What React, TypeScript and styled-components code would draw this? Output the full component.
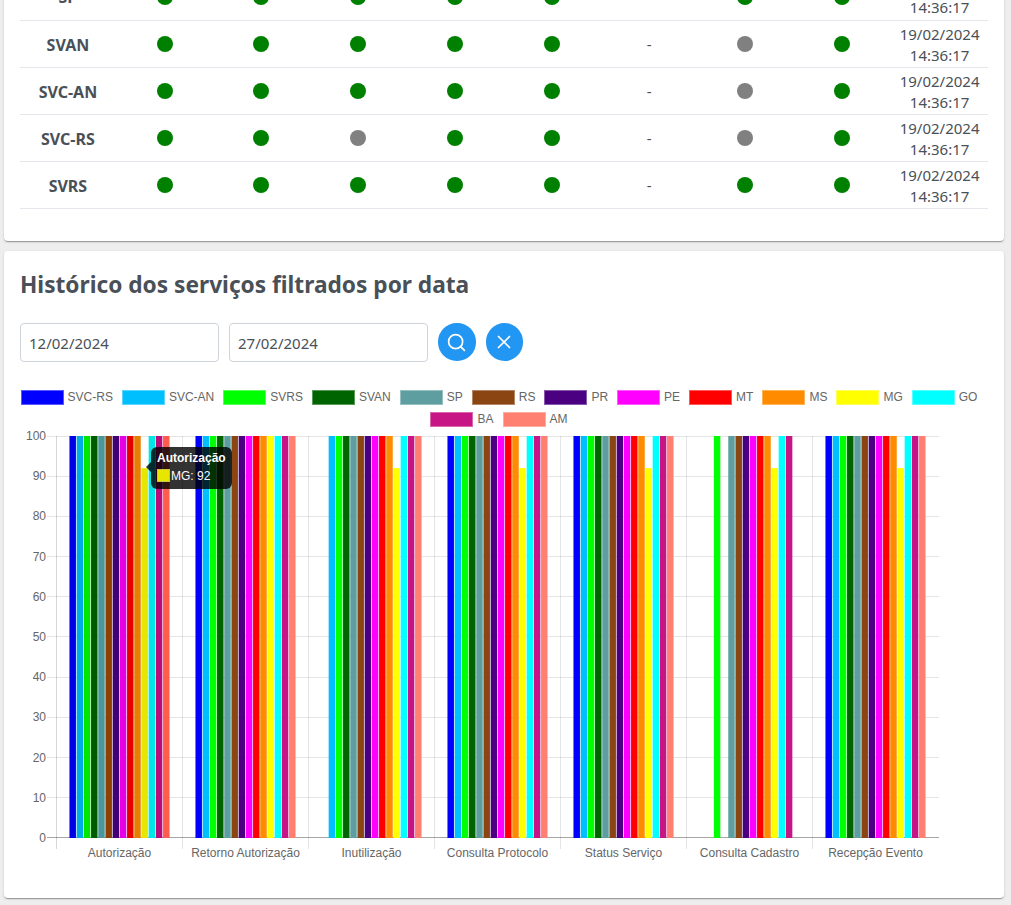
import React from "react";
import styled, { createGlobalStyle } from "styled-components";
import { Search, X } from "lucide-react";

const Global = createGlobalStyle`
  html, body { margin: 0; padding: 0; background: #eeeeee; }
  body { font-family: "Noto Sans", "Open Sans", sans-serif; color: #495057; height: 905px; overflow: hidden; }
`;

const Page = styled.main`
  display: flex;
  flex-direction: column;
  gap: 10px;
  padding: 0 7px 0 4px;
  margin-top: -27px;
`;

const Card = styled.section<{ $pad?: string }>`
  background: #fff;
  border-radius: 4px;
  padding: ${(p) => p.$pad || "0 16px"};
  box-shadow: 0 2px 1px -1px rgba(0, 0, 0, 0.2), 0 1px 1px 0 rgba(0, 0, 0, 0.14), 0 1px 3px 0 rgba(0, 0, 0, 0.12);
`;

const Table = styled.table`
  width: 968px;
  table-layout: fixed;
  border-collapse: collapse;
`;

const Row = styled.tr`
  height: 47px;
  border-bottom: 1px solid #e4e7eb;
`;

const NameCell = styled.th`
  padding: 2px 1px 0 0;
  font-size: 16px;
  font-weight: 700;
  text-align: center;
  color: #495057;
`;

const Cell = styled.td`
  padding: 2px 0 0;
  font-size: 15px;
  line-height: 21px;
  text-align: center;
  color: #495057;
`;

const Dot = styled.span<{ $on: boolean }>`
  display: block;
  width: 16px;
  height: 16px;
  margin: 0 0 1px calc(50% - 8.5px);
  border-radius: 50%;
  background: ${(p) => (p.$on ? "#008000" : "#808080")};
`;

const Title = styled.h2`
  margin: 0;
  font-size: 22.7px;
  line-height: 30px;
  font-weight: 700;
  color: #495057;
`;

const Filters = styled.div`
  display: flex;
  align-items: center;
  gap: 10px;
  margin-top: 23px;
`;

const DateInput = styled.input`
  box-sizing: border-box;
  width: 199px;
  height: 39px;
  padding: 1px 8px 0;
  border: 1px solid #ced4da;
  border-radius: 4px;
  font: 15px "Noto Sans", sans-serif;
  color: #495057;
  outline: none;
`;

const RoundButton = styled.button`
  display: flex;
  align-items: center;
  justify-content: center;
  width: 37.5px;
  height: 37.5px;
  padding: 0;
  border: 0;
  border-radius: 50%;
  background: #2196f3;
  color: #fff;
`;

const Legend = styled.ul`
  display: flex;
  flex-wrap: wrap;
  justify-content: center;
  row-gap: 7px;
  width: 967px;
  margin: 28px 0 0;
  padding: 0;
  list-style: none;
`;

const LegendItem = styled.li`
  display: flex;
  align-items: center;
  gap: 4px;
  height: 15px;
  margin-right: 9px;
  font: 12px/15px "Liberation Sans", Arial, sans-serif;
  color: #666;
`;

const Swatch = styled.span<{ $color: string }>`
  box-sizing: border-box;
  width: 43px;
  height: 15px;
  background: ${(p) => p.$color};
  box-shadow: inset 0 0 0 1px rgba(255, 255, 255, 0.35);
`;

const ChartWrap = styled.div`
  position: relative;
  height: 434px;
  margin: 3px 0 34px;
`;

const ChartSvg = styled.svg`
  display: block;
  font-family: "Liberation Sans", Arial, sans-serif;
  font-size: 12px;
`;

const Tooltip = styled.div`
  position: absolute;
  left: 131px;
  top: 17px;
  box-sizing: border-box;
  width: 81px;
  height: 42px;
  padding: 4px 6px;
  border-radius: 6px;
  background: rgba(0, 0, 0, 0.8);
  color: #fff;
  font: 12px/14px "Liberation Sans", Arial, sans-serif;
  &::before {
    content: "";
    position: absolute;
    left: -5px;
    top: 15px;
    border-style: solid;
    border-width: 5px 5px 5px 0;
    border-color: transparent rgba(0, 0, 0, 0.8) transparent transparent;
  }
`;

const TipTitle = styled.div`
  font-weight: 700;
  margin-bottom: 4px;
`;

const TipLine = styled.div`
  display: flex;
  align-items: center;
  gap: 1px;
  height: 14px;
`;

const TipSwatch = styled.span`
  box-sizing: border-box;
  width: 13px;
  height: 13px;
  background: #e6e600;
  border: 1px solid #c8c83c;
`;

const series = [
  { n: "SVC-RS", c: "#0000ff", h: "#0000e6" },
  { n: "SVC-AN", c: "#00bfff", h: "#00ace6" },
  { n: "SVRS", c: "#00ff00", h: "#00e600" },
  { n: "SVAN", c: "#006400", h: "#005a00" },
  { n: "SP", c: "#5f9ea0", h: "#4a9699" },
  { n: "RS", c: "#8b4513", h: "#8f3f00" },
  { n: "PR", c: "#4b0082", h: "#430075" },
  { n: "PE", c: "#ff00ff", h: "#e600e6" },
  { n: "MT", c: "#ff0000", h: "#e60000" },
  { n: "MS", c: "#ff8c00", h: "#e67e00" },
  { n: "MG", c: "#ffff00", h: "#e6e600" },
  { n: "GO", c: "#00ffff", h: "#00e6e6" },
  { n: "BA", c: "#c71585", h: "#bb0a7a" },
  { n: "AM", c: "#ff8070", h: "#ff5c4d" },
];

const categories = [
  { n: "Autorização", skip: [] as number[], full: false },
  { n: "Retorno Autorização", skip: [], full: true },
  { n: "Inutilização", skip: [0], full: false },
  { n: "Consulta Protocolo", skip: [], full: false },
  { n: "Status Serviço", skip: [], full: false },
  { n: "Consulta Cadastro", skip: [0, 1, 3, 13], full: false },
  { n: "Recepção Evento", skip: [], full: false },
];

const rows = [
  { n: "SP", d: [1, 1, 1, 1, 1, -1, 1, 1] },
  { n: "SVAN", d: [1, 1, 1, 1, 1, -1, 0, 1] },
  { n: "SVC-AN", d: [1, 1, 1, 1, 1, -1, 0, 1] },
  { n: "SVC-RS", d: [1, 1, 0, 1, 1, -1, 0, 1] },
  { n: "SVRS", d: [1, 1, 1, 1, 1, -1, 1, 1] },
];

// chart coordinates are relative to the svg, whose origin is at page (20, 430)
const X0 = 36.5;
const STEP = 126;
const Y0 = 6;
const UNIT = 4.02;
const yOf = (v: number) => Y0 + (100 - v) * UNIT;
const lineY = (v: number) => Math.floor(yOf(v)) + 0.5;

function Chart() {
  const ticks = Array.from({ length: 11 }, (_, i) => i * 10);
  return (
    <ChartSvg width={966} height={434} viewBox="0 0 966 434">
      {ticks.map((t) => (
        <g key={t}>
          <line
            x1={27}
            x2={919}
            y1={lineY(t)}
            y2={lineY(t)}
            stroke={t === 0 ? "rgba(0,0,0,0.35)" : "rgba(0,0,0,0.1)"}
          />
          <text x={26} y={yOf(t) + 4} textAnchor="end" fill="#666">
            {t}
          </text>
        </g>
      ))}
      {categories.map((_, i) => (
        <line
          key={i}
          x1={X0 + STEP * i}
          x2={X0 + STEP * i}
          y1={Y0}
          y2={419}
          stroke={i === 0 ? "rgba(0,0,0,0.16)" : "rgba(0,0,0,0.1)"}
        />
      ))}
      {categories.map((cat, i) =>
        series.map((s, j) => {
          if (cat.skip.includes(j)) return null;
          const v = j === 10 && !cat.full ? 92 : 100;
          const x = X0 + STEP * i + 12.6 + 7.2 * j + 0.36;
          return (
            <rect
              key={j}
              x={x}
              y={yOf(v)}
              width={6.48}
              height={yOf(0) - yOf(v)}
              fill={i === 0 ? s.h : s.c}
            />
          );
        })
      )}
      {categories.map((cat, i) => (
        <text key={cat.n} x={X0 + STEP * i + STEP / 2} y={427} textAnchor="middle" fill="#666">
          {cat.n}
        </text>
      ))}
    </ChartSvg>
  );
}

export default function App() {
  return (
    <>
      <Global />
      <Page>
        <Card $pad="0 16px 32px">
          <Table>
            <tbody>
              {rows.map((r) => (
                <Row key={r.n}>
                  <NameCell>{r.n}</NameCell>
                  {r.d.map((v, i) => (
                    <Cell key={i}>{v < 0 ? "-" : <Dot $on={v === 1} />}</Cell>
                  ))}
                  <Cell>
                    19/02/2024
                    <br />
                    14:36:17
                  </Cell>
                </Row>
              ))}
            </tbody>
          </Table>
        </Card>
        <Card $pad="19px 16px 0">
          <Title>Histórico dos serviços filtrados por data</Title>
          <Filters>
            <DateInput readOnly value="12/02/2024" />
            <DateInput readOnly value="27/02/2024" />
            <RoundButton aria-label="Pesquisar">
              <Search size={21} strokeWidth={1.9} />
            </RoundButton>
            <RoundButton aria-label="Limpar">
              <X size={22} strokeWidth={1.9} />
            </RoundButton>
          </Filters>
          <Legend>
            {series.map((s) => (
              <LegendItem key={s.n}>
                <Swatch $color={s.c} />
                {s.n}
              </LegendItem>
            ))}
          </Legend>
          <ChartWrap>
            <Chart />
            <Tooltip>
              <TipTitle>Autorização</TipTitle>
              <TipLine>
                <TipSwatch />
                MG: 92
              </TipLine>
            </Tooltip>
          </ChartWrap>
        </Card>
      </Page>
    </>
  );
}
